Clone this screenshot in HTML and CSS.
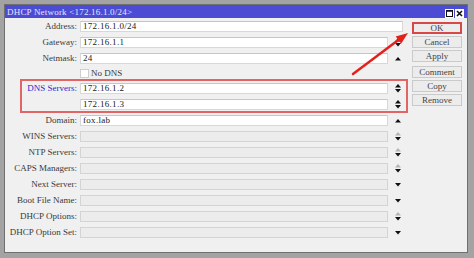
FILE: index.html
```html
<!DOCTYPE html>
<html lang="en">
<head>
  <meta charset="UTF-8">
  <title>DHCP Network</title>
  <link rel="stylesheet" href="styles.css">
</head>
<body>
  <div class="window">
    <div class="titlebar">
      <span class="title">DHCP Network &lt;172.16.1.0/24&gt;</span>
      <span class="title-btns">
        <span class="tbtn"><svg viewBox="0 0 9 9" width="9" height="9"><rect x="1.5" y="1.5" width="6" height="6" fill="none" stroke="#111" stroke-width="1"/><line x1="1.5" y1="2" x2="7.5" y2="2" stroke="#111" stroke-width="1.5"/></svg></span>
        <span class="tbtn"><svg viewBox="0 0 9 9" width="9" height="9"><path d="M2 2L7 7M7 2L2 7" stroke="#111" stroke-width="1.6"/></svg></span>
      </span>
    </div>

    <div class="content">
      <div class="form">
        <div class="row">
          <span class="label">Address:</span>
          <div class="field wide">172.16.1.0/24</div>
        </div>
        <div class="row">
          <span class="label">Gateway:</span>
          <div class="field">172.16.1.1</div>
          <svg class="spin" viewBox="0 0 6 9"><path d="M0 3.5L3 0L6 3.5Z"/><path d="M0 5H6L3 8.5Z"/></svg>
        </div>
        <div class="row">
          <span class="label">Netmask:</span>
          <div class="field">24</div>
          <svg class="spin single" viewBox="0 0 6 4"><path d="M0 3.5L3 0L6 3.5Z"/></svg>
        </div>
        <div class="row check-row">
          <span class="label"></span>
          <label class="check"><span class="box"></span>No DNS</label>
        </div>

        <!-- highlighted group -->
        <div class="group">
          <div class="row">
            <span class="label blue">DNS Servers:</span>
            <div class="field">172.16.1.2</div>
            <svg class="spin" viewBox="0 0 6 9"><path d="M0 3.5L3 0L6 3.5Z"/><path d="M0 5H6L3 8.5Z"/></svg>
          </div>
          <div class="row last">
            <span class="label"></span>
            <div class="field">172.16.1.3</div>
            <svg class="spin" viewBox="0 0 6 9"><path d="M0 3.5L3 0L6 3.5Z"/><path d="M0 5H6L3 8.5Z"/></svg>
          </div>
        </div>

        <div class="row">
          <span class="label">Domain:</span>
          <div class="field">fox.lab</div>
          <svg class="spin single" viewBox="0 0 6 4"><path d="M0 3.5L3 0L6 3.5Z"/></svg>
        </div>
        <div class="row">
          <span class="label">WINS Servers:</span>
          <div class="field off"></div>
          <svg class="spin" viewBox="0 0 6 9"><path class="dim" d="M0 3.5L3 0L6 3.5Z"/><path d="M0 5H6L3 8.5Z"/></svg>
        </div>
        <div class="row">
          <span class="label">NTP Servers:</span>
          <div class="field off"></div>
          <svg class="spin" viewBox="0 0 6 9"><path class="dim" d="M0 3.5L3 0L6 3.5Z"/><path d="M0 5H6L3 8.5Z"/></svg>
        </div>
        <div class="row">
          <span class="label">CAPS Managers:</span>
          <div class="field off"></div>
          <svg class="spin" viewBox="0 0 6 9"><path class="dim" d="M0 3.5L3 0L6 3.5Z"/><path d="M0 5H6L3 8.5Z"/></svg>
        </div>
        <div class="row">
          <span class="label">Next Server:</span>
          <div class="field off"></div>
          <svg class="spin single" viewBox="0 0 6 4"><path d="M0 0H6L3 3.5Z"/></svg>
        </div>
        <div class="row">
          <span class="label">Boot File Name:</span>
          <div class="field off"></div>
          <svg class="spin single" viewBox="0 0 6 4"><path d="M0 0H6L3 3.5Z"/></svg>
        </div>
        <div class="row">
          <span class="label">DHCP Options:</span>
          <div class="field off"></div>
          <svg class="spin" viewBox="0 0 6 9"><path class="dim" d="M0 3.5L3 0L6 3.5Z"/><path d="M0 5H6L3 8.5Z"/></svg>
        </div>
        <div class="row">
          <span class="label">DHCP Option Set:</span>
          <div class="field off"></div>
          <svg class="spin single" viewBox="0 0 6 4"><path d="M0 0H6L3 3.5Z"/></svg>
        </div>
      </div>

      <div class="buttons">
        <div class="btn ok">OK</div>
        <div class="btn">Cancel</div>
        <div class="btn apply">Apply</div>
        <div class="btn">Comment</div>
        <div class="btn">Copy</div>
        <div class="btn">Remove</div>
      </div>
    </div>

    <!-- red pointer annotation -->
    <svg class="pointer" viewBox="0 0 70 56" width="70" height="56">
      <line x1="8" y1="47" x2="54" y2="12.5" stroke="#e3211c" stroke-width="2.5" stroke-linecap="round"/>
      <polygon points="63,6 56.1,16.8 50.7,9.6" fill="#e3211c"/>
    </svg>
  </div>
</body>
</html>
```

FILE: styles.css
```css
body {
  margin: 0;
  background-color: #a3a3a3;
  font-family: "Liberation Serif", "DejaVu Serif", serif;
  font-size: 9px;
  color: #3a3a3a;
}
.window {
  position: relative;
  margin: 4px 0 0 4px;
  width: 464px;
  height: 249px;
  box-sizing: border-box;
  border: 1px solid #6f6f6f;
  background-color: #f0f0f0;
}
.titlebar {
  height: 13px;
  background-color: #4b4bd3;
  color: #e6e6ff;
  display: flex;
  align-items: center;
  justify-content: space-between;
  padding: 0 3px 0 2px;
}
.title {
  letter-spacing: 0.2px;
}
.title-btns {
  display: flex;
  gap: 1px;
  margin-top: 3px;
}
.tbtn {
  display: block;
  width: 9px;
  height: 9px;
  background-color: #fff;
}
.tbtn svg {
  display: block;
}
.content {
  display: flex;
  padding: 1px 5px 0 0;
}
.form {
  width: 403px;
}
.row {
  display: grid;
  grid-template-columns: 72px 308px 20px;
  column-gap: 3px;
  height: 16px;
  align-items: start;
}
.label {
  text-align: right;
  line-height: 11px;
  margin-top: 2px;
  white-space: nowrap;
}
.blue {
  color: #2a2ad0;
}
.field {
  margin-top: 2px;
  height: 11px;
  box-sizing: border-box;
  border: 1px solid #d8d8d8;
  border-top-color: #c6c6c6;
  background-color: #fff;
  color: #1a1a1a;
  line-height: 9px;
  padding-left: 2px;
  letter-spacing: 0.3px;
  white-space: nowrap;
}
.field.off {
  background-color: #ececec;
  border-color: #d4d4d4;
}
.field.wide {
  grid-column: 2 / 4;
  margin-right: 8px;
}
.spin {
  width: 6px;
  height: 9px;
  margin: 2.5px 0 0 4px;
  fill: #111;
}
.spin.single {
  height: 4px;
  margin-top: 5.5px;
}
.spin .dim {
  fill: #b4b4b4;
}
.check-row {
  height: 12px;
}
.check {
  grid-column: 2 / 4;
  display: flex;
  align-items: center;
  gap: 2px;
  margin-top: 1px;
  line-height: 10px;
}
.box {
  width: 9px;
  height: 9px;
  box-sizing: border-box;
  border: 1px solid #cfcfcf;
  background-color: #fff;
}
.group {
  margin-left: 15px;
  border: 2px solid #e26565;
}
.group .row {
  grid-template-columns: 55px 308px 18px;
}
.group .row.last {
  height: 14px;
}
.buttons {
  width: 50px;
  margin: 3px 0 0 4px;
}
.btn {
  height: 12px;
  box-sizing: border-box;
  border: 1px solid #cacaca;
  background-color: #ececec;
  color: #444;
  text-align: center;
  line-height: 10px;
  margin-bottom: 2px;
}
.btn.ok {
  border: 2px solid #d94848;
  line-height: 8px;
}
.btn.apply {
  margin-bottom: 4px;
}
.pointer {
  position: absolute;
  left: 340px;
  top: 22px;
}
```
